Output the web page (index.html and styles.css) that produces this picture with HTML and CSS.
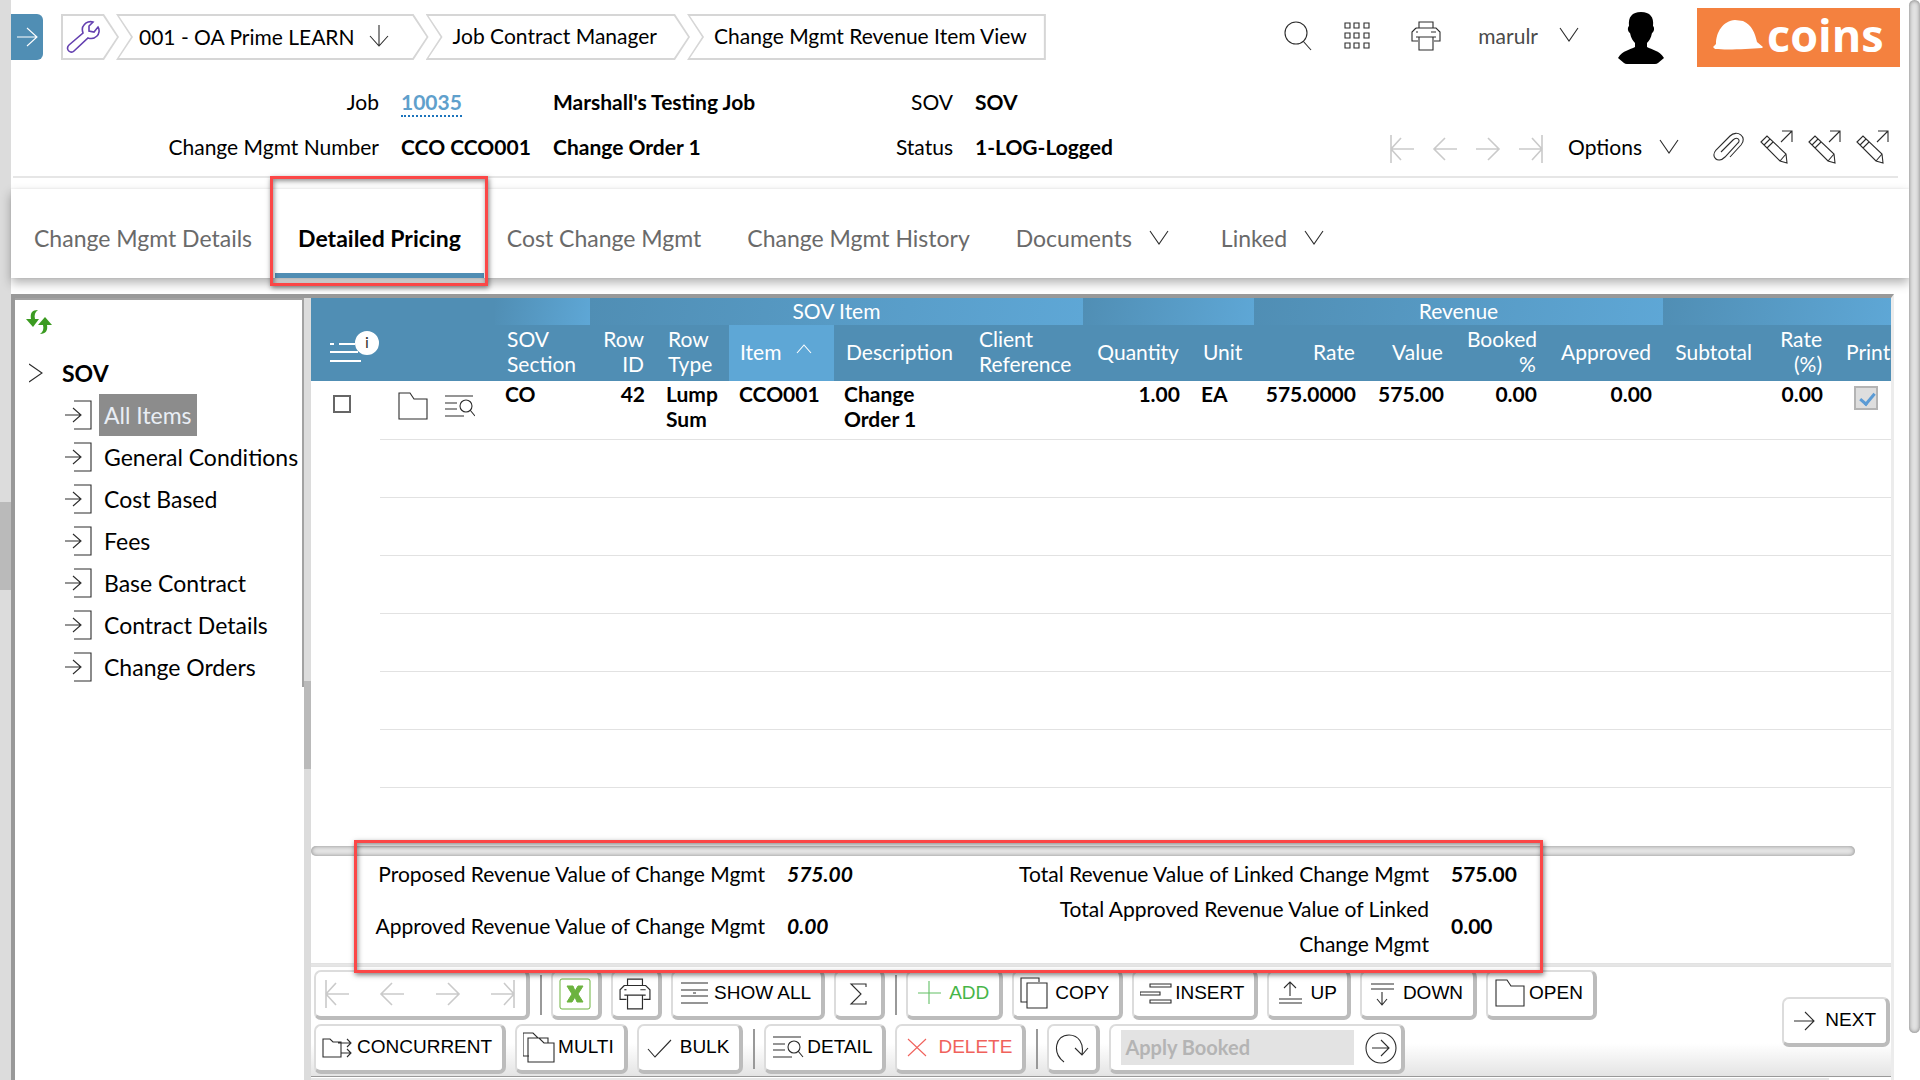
FILE: index.html
```html
<!DOCTYPE html>
<html lang="en">
<head>
<meta charset="utf-8">
<title>Change Mgmt Revenue Item View</title>
<link rel="stylesheet" href="styles.css">
</head>
<body>
<svg class="sprite" aria-hidden="true">
  <symbol id="chev-down" viewBox="0 0 20 16"><path d="M1 1l9 13 9-13"/></symbol>
  <symbol id="first" viewBox="0 0 26 30"><path d="M2 1v28M25 15H2M12 4L2 15l10 11"/></symbol>
  <symbol id="prev" viewBox="0 0 26 30"><path d="M25 15H2M13 4L2 15l11 11"/></symbol>
  <symbol id="next" viewBox="0 0 26 30"><path d="M1 15h23M13 4l11 11-11 11"/></symbol>
  <symbol id="last" viewBox="0 0 26 30"><path d="M24 1v28M1 15h23M14 4l10 11-10 11"/></symbol>
  <symbol id="printer" viewBox="0 0 30 30"><path d="M8 7V1h14v6M5 7h20l4 4v9h-6M7 20H1v-9l4-4M5 16h20M8 16v13h14V16M20 11h5"/><path d="M5 11h2"/></symbol>
  <symbol id="folder" viewBox="0 0 30 28"><path d="M1 1h11l4 6h13v20H1z"/></symbol>
  <symbol id="detail" viewBox="0 0 30 24"><path d="M0 2h28M0 9h12M0 15h12M0 22h19M25 16l5 6"/><ellipse cx="21" cy="12" rx="6" ry="6"/></symbol>
  <symbol id="enter" viewBox="0 0 28 30"><path d="M9 1h17v28H9M0 15h15M8 8l8 7-8 7"/></symbol>
  <symbol id="pencil" viewBox="0 0 34 34"><path d="M1 12l6-6 19 18 1 9-7-2zM4 15l6-6M7 18l6-6M20 31l6-7M22 1h10v11M32 1L21 12"/></symbol>
</svg>
<div class="app">
  <div class="rail"><div class="rail-thumb"></div></div>
  <div class="main">
    <header class="topbar">
      <button class="expand" aria-label="Expand menu"><svg class="ic" width="22" height="22" viewBox="0 0 22 22"><path d="M1 11h20M11 2l10 9-10 9"/></svg></button>
      <nav class="crumbs">
        <a class="crumb crumb-tool" href="#" aria-label="Tools"><svg class="ic wrench" width="34" height="34" viewBox="0 0 34 34"><path d="M3 25L17 13C16 10 16 7 18 5C20 2 24 1 27 2L23 6V11L28 12L32 7C34 10 33 14 31 16C28 19 25 19 22 18L8 31C6 33 3 32 2 30C1 28 1 27 3 25Z"/></svg></a>
        <a class="crumb crumb-org" href="#">001 - OA Prime LEARN<svg class="ic" width="20" height="22" viewBox="0 0 20 22"><path d="M10 0v20M1 11l9 10 9-10"/></svg></a>
        <a class="crumb" href="#">Job Contract Manager</a>
        <a class="crumb crumb-last" href="#">Change Mgmt Revenue Item View</a>
      </nav>
      <div class="tools">
        <button class="tool" aria-label="Search"><svg class="ic" width="28" height="30" viewBox="0 0 28 30"><ellipse cx="12" cy="12" rx="11" ry="11"/><path d="M19 20l8 9"/></svg></button>
        <button class="tool" aria-label="Apps"><svg class="ic" width="26" height="28" viewBox="0 0 26 28"><path d="M1 1h5v5H1zM10 1h5v5h-5zM20 1h5v5h-5zM1 11h5v5H1zM10 11h5v5h-5zM20 11h5v5h-5zM1 21h5v5H1zM10 21h5v5h-5zM20 21h5v5h-5z"/></svg></button>
        <button class="tool" aria-label="Print"><svg class="ic" width="30" height="30"><use href="#printer"/></svg></button>
        <button class="tool user">marulr<svg class="ic" width="20" height="16"><use href="#chev-down"/></svg></button>
        <svg class="avatar" width="46" height="52" viewBox="0 0 46 52"><path d="M23 0C32 0 36 5 35 14C37 16 36 20 34 21C33 26 31 29 29 31V35C34 38 41 38 46 46L40 51Q39 52 37 52H9Q7 52 6 51L0 46C5 38 12 38 17 35V31C15 29 13 26 12 21C10 20 9 16 11 14C10 5 14 0 23 0Z"/></svg>
        <a class="logo" href="#" aria-label="coins"><svg width="50" height="30" viewBox="0 0 50 30"><path d="M0 27L3 24C3 12 10 1 22 0L30 1C39 5 42 13 44 22L50 27L49 28C35 29 15 30 2 29Z"/></svg><span>coins</span></a>
      </div>
    </header>

    <section class="info">
      <dl class="fields">
        <dt>Job</dt><dd><a href="#">10035</a></dd><dd>Marshall's Testing Job</dd><dt>SOV</dt><dd>SOV</dd>
        <dt>Change Mgmt Number</dt><dd>CCO CCO001</dd><dd>Change Order 1</dd><dt>Status</dt><dd>1-LOG-Logged</dd>
      </dl>
      <div class="actions">
        <div class="pager">
          <button aria-label="First" disabled><svg class="ic" width="26" height="30"><use href="#first"/></svg></button>
          <button aria-label="Previous" disabled><svg class="ic" width="26" height="30"><use href="#prev"/></svg></button>
          <button aria-label="Next" disabled><svg class="ic" width="26" height="30"><use href="#next"/></svg></button>
          <button aria-label="Last" disabled><svg class="ic" width="26" height="30"><use href="#last"/></svg></button>
        </div>
        <button class="options">Options<svg class="ic" width="20" height="16"><use href="#chev-down"/></svg></button>
        <div class="edits">
          <button aria-label="Attachments"><svg class="ic" width="34" height="30" viewBox="0 0 34 30"><path d="M9 20L21 8C25 4 29 8 26 11L13 25C6 32-2 25 4 18L18 4C25-3 36 5 29 13L18 25"/></svg></button>
          <button aria-label="Edit 1"><svg class="ic" width="34" height="34"><use href="#pencil"/></svg></button>
          <button aria-label="Edit 2"><svg class="ic" width="34" height="34"><use href="#pencil"/></svg></button>
          <button aria-label="Edit 3"><svg class="ic" width="34" height="34"><use href="#pencil"/></svg></button>
        </div>
      </div>
    </section>

    <nav class="tabs">
      <a class="tab" href="#">Change Mgmt Details</a>
      <a class="tab active" href="#">Detailed Pricing<span class="callout callout-tab"></span></a>
      <a class="tab" href="#">Cost Change Mgmt</a>
      <a class="tab" href="#">Change Mgmt History</a>
      <a class="tab" href="#">Documents<svg class="ic" width="20" height="16"><use href="#chev-down"/></svg></a>
      <a class="tab" href="#">Linked<svg class="ic" width="20" height="16"><use href="#chev-down"/></svg></a>
    </nav>

    <div class="frame">
      <aside class="side">
        <div class="side-inner">
        <button class="reload" aria-label="Refresh tree"><svg width="26" height="24" viewBox="0 0 26 24"><path d="M12 0C6 0 4 3 5 9H0L7 17L13 9H9C8 5 9 2 12 0Z"/><path d="M14 24C20 24 22 20 21 15H26L19 7L12 15H17C18 19 17 22 14 24Z"/></svg></button>
        <a class="root" href="#"><svg class="ic" width="14" height="20" viewBox="0 0 14 20"><path d="M0 1l13 9-13 9"/></svg>SOV</a>
        <ul class="tree">
          <li><a href="#" class="sel"><svg class="ic" width="28" height="30"><use href="#enter"/></svg><span>All Items</span></a></li>
          <li><a href="#"><svg class="ic" width="28" height="30"><use href="#enter"/></svg><span>General Conditions</span></a></li>
          <li><a href="#"><svg class="ic" width="28" height="30"><use href="#enter"/></svg><span>Cost Based</span></a></li>
          <li><a href="#"><svg class="ic" width="28" height="30"><use href="#enter"/></svg><span>Fees</span></a></li>
          <li><a href="#"><svg class="ic" width="28" height="30"><use href="#enter"/></svg><span>Base Contract</span></a></li>
          <li><a href="#"><svg class="ic" width="28" height="30"><use href="#enter"/></svg><span>Contract Details</span></a></li>
          <li><a href="#"><svg class="ic" width="28" height="30"><use href="#enter"/></svg><span>Change Orders</span></a></li>
        </ul>
        </div>
      </aside>
      <div class="splitter"><div class="splitter-thumb"></div></div>
      <div class="content">
        <div class="grid-area">
          <table class="grid">
            <colgroup><col class="c-check"><col class="c-icons"><col class="c-sec"><col class="c-id"><col class="c-type"><col class="c-item"><col><col class="c-ref"><col class="c-qty"><col class="c-unit"><col class="c-rate"><col class="c-val"><col class="c-book"><col class="c-appr"><col class="c-sub"><col class="c-pct"><col class="c-print"></colgroup>
            <thead>
              <tr class="groups"><th colspan="2"></th><th class="g"></th><th class="g" colspan="5">SOV Item</th><th class="g" colspan="2"></th><th class="g" colspan="4">Revenue</th><th class="g" colspan="3"></th></tr>
              <tr class="heads">
                <th colspan="2"><svg class="listinfo" width="52" height="40" viewBox="0 0 52 40"><path d="M0 13h4M9 13h16M0 21h28M0 30h31"/><circle cx="37" cy="12" r="11"/><text x="37" y="17">i</text></svg></th>
                <th>SOV Section</th><th class="r">Row ID</th><th>Row Type</th>
                <th class="sorted">Item<svg class="ic" width="16" height="10" viewBox="0 0 16 10"><path d="M1 9l7-8 7 8"/></svg></th>
                <th>Description</th><th>Client Reference</th><th class="r">Quantity</th><th>Unit</th><th class="r">Rate</th><th class="r">Value</th><th class="r">Booked %</th><th class="r">Approved</th><th class="r">Subtotal</th><th class="r">Rate (%)</th><th>Print</th>
              </tr>
            </thead>
            <tbody>
              <tr>
                <td class="check"><input type="checkbox" aria-label="Select row"></td>
                <td class="rowicons"><button aria-label="Open row"><svg class="ic" width="30" height="28"><use href="#folder"/></svg></button><button aria-label="Row detail"><svg class="ic" width="30" height="24"><use href="#detail"/></svg></button></td>
                <td>CO</td><td class="r">42</td><td>Lump Sum</td><td>CCO001</td><td>Change<br>Order 1</td><td></td><td class="r">1.00</td><td>EA</td><td class="r">575.0000</td><td class="r">575.00</td><td class="r">0.00</td><td class="r">0.00</td><td></td><td class="r">0.00</td>
                <td class="print"><input type="checkbox" checked disabled aria-label="Print"></td>
              </tr>
              <tr><td></td><td colspan="16"></td></tr>
              <tr><td></td><td colspan="16"></td></tr>
              <tr><td></td><td colspan="16"></td></tr>
              <tr><td></td><td colspan="16"></td></tr>
              <tr><td></td><td colspan="16"></td></tr>
              <tr><td></td><td colspan="16"></td></tr>
            </tbody>
          </table>
        </div>
        <div class="hscroll"></div>
        <div class="summary">
          <dl class="totals">
            <dt>Proposed Revenue Value of Change Mgmt</dt><dd><i>575.00</i></dd>
            <dt>Total Revenue Value of Linked Change Mgmt</dt><dd>575.00</dd>
            <dt>Approved Revenue Value of Change Mgmt</dt><dd><i>0.00</i></dd>
            <dt>Total Approved Revenue Value of Linked Change Mgmt</dt><dd>0.00</dd>
          </dl>
          <span class="callout callout-totals"></span>
        </div>
        <div class="toolbar">
          <div class="rows">
            <div class="row">
              <div class="btn navset">
                <button aria-label="First" disabled><svg class="ic" width="26" height="30"><use href="#first"/></svg></button>
                <button aria-label="Previous" disabled><svg class="ic" width="26" height="30"><use href="#prev"/></svg></button>
                <button aria-label="Next" disabled><svg class="ic" width="26" height="30"><use href="#next"/></svg></button>
                <button aria-label="Last" disabled><svg class="ic" width="26" height="30"><use href="#last"/></svg></button>
              </div>
              <span class="sep"></span>
              <button class="btn icon" aria-label="Export to Excel"><svg class="excel" width="32" height="32" viewBox="0 0 32 32"><rect x="1" y="1" width="30" height="30" rx="2"/><path d="M8 8h6l2 5 3-5h5l-5 8 5 8h-6l-2-5-3 5H8l5-8z"/></svg></button>
              <button class="btn icon" aria-label="Print"><svg class="ic" width="32" height="32"><use href="#printer"/></svg></button>
              <button class="btn"><svg class="ic" width="32" height="32" viewBox="0 0 32 32"><path d="M2 6h27M2 13h27M2 19h27M2 26h27M14 16h3"/></svg>SHOW ALL</button>
              <button class="btn icon" aria-label="Sum"><svg class="ic" width="32" height="32" viewBox="0 0 32 32"><path d="M24 9V6H9l10 10L9 26h15v-3"/></svg></button>
              <span class="sep"></span>
              <button class="btn add"><svg class="ic" width="32" height="32" viewBox="0 0 32 32"><path d="M4 16h23M15 4v23"/></svg>ADD</button>
              <button class="btn"><svg class="ic" width="32" height="32" viewBox="0 0 32 32"><path d="M7 25H1V1h18v4M7 6h20v25H7z"/></svg>COPY</button>
              <button class="btn"><svg class="ic" width="32" height="32" viewBox="0 0 32 32"><path d="M10 7h21v3H10zM0 15h20v3H0zM10 23h21v3H10z"/></svg>INSERT</button>
              <button class="btn"><svg class="ic" width="32" height="32" viewBox="0 0 32 32"><path d="M4 22h23M4 26h23M15 19V5M9 11l6-6 6 6"/></svg>UP</button>
              <button class="btn"><svg class="ic" width="32" height="32" viewBox="0 0 32 32"><path d="M3 7h23M3 12h23M14 15v13M9 22l5 6 5-6"/></svg>DOWN</button>
              <button class="btn"><svg class="ic" width="32" height="28"><use href="#folder"/></svg>OPEN</button>
            </div>
            <div class="row">
              <button class="btn"><svg class="ic" width="32" height="32" viewBox="0 0 32 32"><path d="M1 8h7l3 3h8v15H1zM16 12h13M25 8l4 4-4 4M19 22h10M25 18l4 4-4 4"/></svg>CONCURRENT</button>
              <button class="btn"><svg class="ic" width="32" height="32" viewBox="0 0 32 32"><path d="M6 25H0V2h10l5 5h10v5M5 7h11l5 5h10v19H5z"/></svg>MULTI</button>
              <button class="btn"><svg class="ic" width="32" height="32" viewBox="0 0 32 32"><path d="M3 18l7 8L26 9"/></svg>BULK</button>
              <span class="sep"></span>
              <button class="btn"><svg class="ic" width="32" height="24"><use href="#detail"/></svg>DETAIL</button>
              <button class="btn del"><svg class="ic" width="32" height="32" viewBox="0 0 32 32"><path d="M5 8l18 17M23 8L5 25"/></svg>DELETE</button>
              <span class="sep"></span>
              <button class="btn icon" aria-label="Refresh"><svg class="ic" width="34" height="32" viewBox="0 0 34 32"><path d="M9 30C-3 21 0 3 14 3C24 3 29 12 27 22M20 16l7 7 6-7"/></svg></button>
              <div class="btn apply">
                <input type="text" value="Apply Booked" aria-label="Apply Booked" disabled>
                <button aria-label="Apply"><svg class="ic" width="32" height="32" viewBox="0 0 32 32"><circle cx="16" cy="16" r="15"/><path d="M7 16h17M16 8l8 8-8 8"/></svg></button>
              </div>
            </div>
          </div>
          <button class="btn"><svg class="ic" width="32" height="30" viewBox="0 0 32 30"><path d="M4 16h20M15 7l9 9-9 9"/></svg>NEXT</button>
        </div>
        <div class="status"><div></div></div>
      </div>
    </div>
  </div>
  <div class="vscroll"></div>
</div>
</body>
</html>
```
FILE: styles.css
```css
* { box-sizing: border-box; }
body {
  margin: 0;
  background: #fff;
  color: #000;
  font-family: Lato, "Open Sans", sans-serif;
  font-size: 21px;
  line-height: 25px;
}
a { color: inherit; text-decoration: none; }
button {
  margin: 0;
  padding: 0;
  border: 0;
  background: none;
  color: inherit;
  font: inherit;
  display: flex;
  align-items: center;
}
dl, dd, ul { margin: 0; padding: 0; list-style: none; }
svg { display: block; flex: none; }
.sprite { position: absolute; width: 0; height: 0; }
.ic { fill: none; stroke: #2c2c2c; stroke-width: 1.1; }

.app { display: flex; min-height: 100vh; }
.rail { flex: none; width: 11px; background: #dcdcdc; padding-top: 502px; }
.rail-thumb { height: 88px; background: #bababa; }
.main { flex: 1; min-width: 0; display: flex; flex-direction: column; }
.vscroll {
  flex: none;
  width: 11px;
  margin-bottom: 47px;
  border-radius: 6px;
  background: #e2e2e2;
  box-shadow: inset 0 0 4px #777;
}

/* top bar */
.topbar { display: flex; height: 74px; padding-top: 8px; align-items: flex-start; }
.expand {
  width: 32px;
  height: 46px;
  margin: 6px 18px 0 0;
  justify-content: center;
  border-radius: 0 6px 6px 0;
  background: #508eb4;
}
.expand .ic { stroke: #fff; }
.crumbs { display: flex; margin-top: 6px; }
.crumb {
  position: relative;
  z-index: 0;
  display: flex;
  align-items: center;
  height: 46px;
  margin-right: -3px;
  padding: 0 33px 3px 27px;
  white-space: nowrap;
  background: #d6d6d6;
  clip-path: polygon(0 0, calc(100% - 15px) 0, 100% 50%, calc(100% - 15px) 100%, 0 100%, 15px 50%);
}
.crumb::before {
  content: "";
  position: absolute;
  z-index: -1;
  inset: 0;
  background: #fff;
  clip-path: polygon(3px 2px, calc(100% - 16px) 2px, calc(100% - 2px) 50%, calc(100% - 16px) calc(100% - 2px), 3px calc(100% - 2px), 17px 50%);
}
.crumb-org { padding: 0 40px 2px 23px; gap: 14px; }
.crumb-tool { padding: 0 19px 0 5px; clip-path: polygon(0 0, calc(100% - 15px) 0, 100% 50%, calc(100% - 15px) 100%, 0 100%); }
.crumb-tool::before { clip-path: polygon(2px 2px, calc(100% - 16px) 2px, calc(100% - 2px) 50%, calc(100% - 16px) calc(100% - 2px), 2px calc(100% - 2px)); }
.crumb-last { padding-right: 19px; clip-path: polygon(0 0, 100% 0, 100% 100%, 0 100%, 15px 50%); }
.crumb-last::before { clip-path: polygon(3px 2px, calc(100% - 2px) 2px, calc(100% - 2px) calc(100% - 2px), 3px calc(100% - 2px), 17px 50%); }
.wrench { stroke: #6440b0; stroke-width: 1.6; }
.tools { display: flex; margin-left: auto; padding-right: 9px; color: #4a4a4a; }
.tool { height: 56px; margin-right: 32px; }
.tool + .tool + .tool { margin: 0 37px 0 9px; }
.tool.user.user { gap: 21px; margin: 0 39px 0 0; padding-bottom: 2px; }
.avatar { margin: 4px 33px 0 0; fill: #000; }
.logo {
  display: flex;
  width: 203px;
  height: 59px;
  padding: 0 0 6px 16px;
  gap: 4px;
  align-items: center;
  background: #f4813f;
  color: #fff;
  font: 700 45px/50px "Open Sans", sans-serif;
}
.logo svg { fill: #fff; }

/* record header */
.info {
  display: flex;
  justify-content: space-between;
  align-items: flex-end;
  margin: 0 11px 0 2px;
  padding: 5px 0 7px;
  border-bottom: 2px solid #e6e6e6;
}
.fields {
  display: grid;
  grid-template-columns: 366px 130px 230px 148px auto;
  column-gap: 22px;
  line-height: 45px;
  white-space: nowrap;
}
.fields dt { text-align: right; }
.fields dd { font-weight: 700; }
.fields a { color: #5fa0cc; padding-bottom: 1px; border-bottom: 2px dotted #1c74bc; }
.actions { display: flex; align-items: center; height: 45px; }
.pager { display: flex; gap: 17px; padding-top: 4px; }
.pager .ic, .navset .ic { stroke: #cacaca; stroke-width: 1.6; }
.options { gap: 17px; margin: 0 33px 0 24px; }
.edits { display: flex; gap: 14px; margin-right: 8px; }

/* tabs */
.tabs {
  display: flex;
  height: 89px;
  margin-top: 11px;
  box-shadow: 0 5px 10px rgba(0, 0, 0, .3), 0 0 2px rgba(0, 0, 0, .08);
  background: #fff;
  color: #6a6a6a;
  font-size: 23px;
}
.tab { position: relative; display: flex; align-items: center; gap: 17px; padding: 14px 23px 0; border-bottom: 5px solid transparent; }
.tab .ic { margin-right: 6px; }
.tab.active { color: #000; font-weight: 700; border-bottom-color: #508eb4; }
.callout {
  position: absolute;
  border: 3px solid #fb4747;
  box-shadow: 1px 2px 5px rgba(0, 0, 0, .5), inset 1px 2px 5px rgba(0, 0, 0, .45);
  pointer-events: none;
}
.callout-tab { inset: -13px -4px -13px -5px; }

/* body frame */
.frame {
  flex: 1;
  display: flex;
  margin: 16px 15px 0 0;
  border-top: 4px solid #999;
  border-left: 4px solid #999;
  border-right: 3px solid #ececec;
}
.side { flex: none; width: 289px; border-top: 2px solid #a2a2a2; }
.side-inner { height: 387px; border-right: 2px solid #a2a2a2; padding: 10px 0 0 11px; }
.reload { height: 24px; fill: #3b9b21; }
.root { display: flex; align-items: center; gap: 19px; height: 42px; margin-top: 18px; padding-left: 3px; font-size: 23px; font-weight: 700; }
.tree { padding-left: 39px; font-size: 23px; white-space: nowrap; }
.tree a { display: flex; align-items: center; height: 42px; gap: 6px; }
.tree span { padding: 0 5px; line-height: 42px; }
.tree .sel span { background: #8c8c8c; color: #e9eef5; }
.splitter { flex: none; width: 7px; background: #dcdcdc; padding-top: 383px; }
.splitter-thumb { height: 88px; background: #bababa; }
.content { flex: 1; min-width: 0; display: flex; flex-direction: column; }

/* grid */
.grid-area { padding-bottom: 58px; }
.grid { width: 100%; table-layout: fixed; border-collapse: collapse; }
.c-check { width: 69px; } .c-icons { width: 115px; } .c-sec { width: 95px; } .c-id { width: 66px; }
.c-type { width: 73px; } .c-item { width: 105px; } .c-ref { width: 116px; } .c-qty { width: 108px; }
.c-unit { width: 63px; } .c-rate { width: 113px; } .c-val { width: 88px; } .c-book { width: 93px; }
.c-appr { width: 115px; } .c-sub { width: 101px; } .c-pct { width: 70px; } .c-print { width: 57px; }
.grid th { padding: 0 12px; background: #508eb4; color: #fff; font-weight: 400; text-align: left; }
.groups th { height: 27px; text-align: center; }
.grid .groups th { padding-bottom: 2px; }
.groups .g { background: linear-gradient(100deg, #508eb4, #5ea7d6); }
.grid .heads th { height: 56px; padding-bottom: 4px; }
.grid .heads .sorted { background: #5ea7d6; padding-left: 11px; white-space: nowrap; }
.sorted .ic { display: inline-block; margin: 0 0 6px 15px; stroke: #fff; }
.listinfo { margin-left: 7px; stroke: #fff; stroke-width: 2; fill: #fff; }
.listinfo text { font-size: 16px; text-anchor: middle; fill: #333; stroke: none; }
.grid .r { text-align: right; }
.grid td { height: 58px; padding: 0 11px 0 10px; border-bottom: 1px solid #e2e2e2; vertical-align: top; font-weight: 700; }
.grid td:first-child { border-bottom: 0; }
.grid .heads th:last-child { padding-right: 0; }
.check input {
  appearance: none;
  display: block;
  width: 18px;
  height: 18px;
  margin: 14px 0 0 12px;
  border: 2px solid #666;
}
.grid .rowicons { padding: 11px 0 0 18px; }
.rowicons button { display: inline-flex; height: 28px; margin-right: 17px; vertical-align: top; }
.print input {
  appearance: none;
  display: block;
  width: 24px;
  height: 24px;
  margin: 5px 0 0 10px;
  border: 2px solid #b4b4b4;
  background: #dedede;
  position: relative;
}
.print input::after {
  content: "";
  position: absolute;
  left: 7px;
  top: 2px;
  width: 6px;
  height: 12px;
  border: solid #5b9bd5;
  border-width: 0 3px 3px 0;
  rotate: 40deg;
}
.hscroll { height: 10px; margin-right: 36px; border-radius: 5px; background: #e4e4e4; box-shadow: inset 0 0 4px #888; }

/* totals */
.summary { position: relative; }
.totals {
  display: grid;
  grid-template-columns: 454px 200px 420px auto;
  column-gap: 22px;
  align-items: center;
  height: 107px;
  line-height: 35px;
}
.totals dt { text-align: right; }
.totals dd { font-weight: 700; }
.totals { align-content: start; }
.callout-totals { z-index: 1; left: 43px; top: -16px; width: 1189px; bottom: -10px; }

/* toolbar */
.toolbar {
  display: flex;
  justify-content: space-between;
  align-items: center;
  height: 113px;
  padding: 1px 1px 0 3px;
  border-top: 4px double #e2e2e2;
  background: linear-gradient(#fff 70%, #e4e4e4);
  font: 19px/24px "Liberation Sans", Arial, sans-serif;
}
.rows { display: grid; gap: 4px; }
.row { display: flex; align-items: center; gap: 9px; }
.btn {
  height: 50px;
  padding: 0 10px 2px 6px;
  gap: 3px;
  border: 2px solid #dcdcdc;
  border-right: 4px solid #bcbcbc;
  border-bottom: 4px solid #bcbcbc;
  border-radius: 7px;
  background: #fff;
  white-space: nowrap;
}
.btn.icon { padding: 0 7px 0 6px; }
.btn.add { color: #46b548; }
.btn.add .ic { stroke: #62c065; }
.btn.del { color: #f0625c; }
.btn.del .ic { stroke: #f0625c; }
.excel { fill: none; stroke: #6cb33f; }
.excel path { fill: #6cb33f; }
.navset { display: flex; align-items: center; width: 216px; justify-content: space-between; padding: 0 10px 0 8px; }
.sep { width: 2px; height: 40px; margin-left: 1px; background: #999; }
.apply { display: flex; align-items: center; width: 296px; padding: 0 4px 0 10px; gap: 11px; }
.apply input {
  flex: 1;
  min-width: 0;
  height: 35px;
  padding: 0 4px 2px;
  border: 0;
  background: #e3e3e3;
  color: #b4b4b4;
  font: 700 20px/33px Lato, sans-serif;
}
.status { flex: 1; min-height: 4px; border-top: 1px solid #999; padding: 1px 62px 0 0; }
.status div { height: 100%; background: #e6e6e6; }
```
